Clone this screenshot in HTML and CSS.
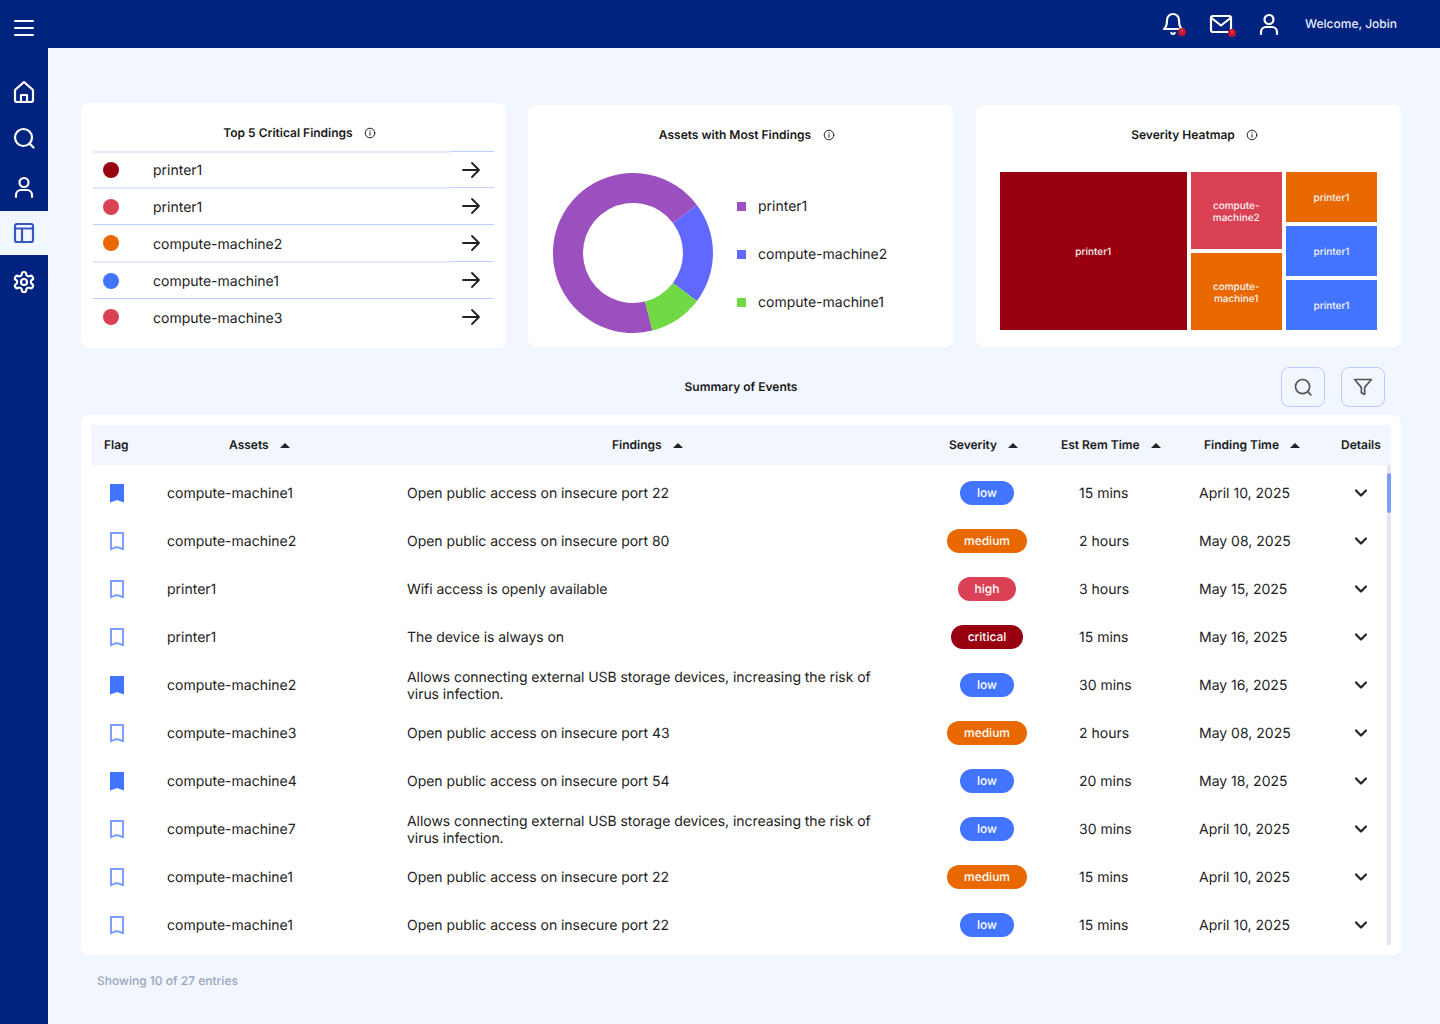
FILE: index.html
```html
<!DOCTYPE html>
<html lang="en">
<head>
<meta charset="utf-8">
<title>Dashboard</title>
<link rel="stylesheet" href="styles.css">
</head>
<body>
<svg class="defs" width="0" height="0" aria-hidden="true">
  <symbol id="i-user" viewBox="0 0 24 24"><circle cx="12" cy="7.5" r="4.5"/><path d="M4 22v-2a5 5 0 0 1 5-5h6a5 5 0 0 1 5 5v2"/></symbol>
  <symbol id="i-search" viewBox="0 0 24 24"><circle cx="11.5" cy="11.5" r="8.5"/><path d="m21.5 21.5-3.9-3.9"/></symbol>
  <symbol id="i-info" viewBox="0 0 12 12"><circle cx="6" cy="6" r="4.8"/><path d="M6 5.6v2.6M6 3.6v.4"/></symbol>
  <symbol id="i-arrow" viewBox="0 0 24 24"><path d="M4 12h16M13 5l7 7-7 7"/></symbol>
  <symbol id="i-chev" viewBox="0 0 12 8"><path d="m1 1.5 5 5 5-5"/></symbol>
  <symbol id="i-flag" viewBox="0 0 16 20"><path d="M2 2h12v16l-6-2L2 18z"/></symbol>
</svg>
<div class="app">
  <header class="topbar">
    <button class="menu" aria-label="Menu"><span></span><span></span><span></span></button>
    <div class="top-actions">
      <span class="top-icon">
        <svg class="ico" width="24" height="24" viewBox="0 0 24 24"><path d="M6 8a6 6 0 0 1 12 0c0 7 3 9 3 9H3s3-2 3-9"/><path d="M10.3 21a1.94 1.94 0 0 0 3.4 0"/></svg>
        <i class="dot-alert bell-dot">!</i>
      </span>
      <span class="top-icon">
        <svg class="ico" width="24" height="24" viewBox="0 0 24 24"><rect x="2" y="4" width="20" height="16" rx="2"/><path d="m2.5 6 9.5 7.5L21.5 6"/></svg>
        <i class="dot-alert mail-dot">!</i>
      </span>
      <span class="top-icon">
        <svg class="ico" width="24" height="24"><use href="#i-user"/></svg>
      </span>
      <span class="welcome">Welcome, Jobin</span>
    </div>
  </header>
  <nav class="sidebar">
    <a class="nav-item"><svg class="ico" width="24" height="24" viewBox="0 0 24 24"><path d="M3 10 12 2l9 8v10a2 2 0 0 1-2 2H5a2 2 0 0 1-2-2z"/><path d="M9 22v-7h6v7"/></svg></a>
    <a class="nav-item"><svg class="ico" width="24" height="24"><use href="#i-search"/></svg></a>
    <a class="nav-item"><svg class="ico" width="24" height="24"><use href="#i-user"/></svg></a>
    <a class="nav-item active"><svg class="ico" width="24" height="24" viewBox="0 0 24 24"><rect x="3" y="3" width="18" height="18" rx="2"/><path d="M3 7.5h18M10 7.5V21"/></svg></a>
    <a class="nav-item"><svg class="ico" width="24" height="24" viewBox="0 0 24 24"><path d="M12.22 2h-.44a2 2 0 0 0-2 2v.18a2 2 0 0 1-1 1.73l-.43.25a2 2 0 0 1-2 0l-.15-.08a2 2 0 0 0-2.73.73l-.22.38a2 2 0 0 0 .73 2.73l.15.1a2 2 0 0 1 1 1.72v.51a2 2 0 0 1-1 1.74l-.15.09a2 2 0 0 0-.73 2.73l.22.38a2 2 0 0 0 2.73.73l.15-.08a2 2 0 0 1 2 0l.43.25a2 2 0 0 1 1 1.73V20a2 2 0 0 0 2 2h.44a2 2 0 0 0 2-2v-.18a2 2 0 0 1 1-1.73l.43-.25a2 2 0 0 1 2 0l.15.08a2 2 0 0 0 2.73-.73l.22-.39a2 2 0 0 0-.73-2.73l-.15-.08a2 2 0 0 1-1-1.74v-.5a2 2 0 0 1 1-1.74l.15-.09a2 2 0 0 0 .73-2.73l-.22-.38a2 2 0 0 0-2.73-.73l-.15.08a2 2 0 0 1-2 0l-.43-.25a2 2 0 0 1-1-1.73V4a2 2 0 0 0-2-2z"/><circle cx="12" cy="12" r="3"/></svg></a>
  </nav>
  <main class="main">
    <section class="cards">
      <article class="card card-top">
        <h2 class="card-title"><span class="lift">Top 5 Critical Findings</span> <svg class="info" width="12" height="12"><use href="#i-info"/></svg></h2>
        <ul class="top-list">
          <li class="top-row pale"><span class="top-main"><i class="sev-dot critical"></i><span class="top-name">printer1</span></span><span class="top-go"><svg class="arrow" width="24" height="24"><use href="#i-arrow"/></svg></span></li>
          <li class="top-row pale"><span class="top-main"><i class="sev-dot high"></i><span class="top-name">printer1</span></span><span class="top-go"><svg class="arrow" width="24" height="24"><use href="#i-arrow"/></svg></span></li>
          <li class="top-row"><span class="top-main"><i class="sev-dot medium"></i><span class="top-name">compute-machine2</span></span><span class="top-go"><svg class="arrow" width="24" height="24"><use href="#i-arrow"/></svg></span></li>
          <li class="top-row pale"><span class="top-main"><i class="sev-dot low"></i><span class="top-name">compute-machine1</span></span><span class="top-go"><svg class="arrow" width="24" height="24"><use href="#i-arrow"/></svg></span></li>
          <li class="top-row"><span class="top-main"><i class="sev-dot high"></i><span class="top-name">compute-machine3</span></span><span class="top-go"><svg class="arrow" width="24" height="24"><use href="#i-arrow"/></svg></span></li>
        </ul>
      </article>
      <article class="card card-side">
        <h2 class="card-title"><span class="lift">Assets with Most Findings</span> <svg class="info" width="12" height="12"><use href="#i-info"/></svg></h2>
        <div class="donut-wrap">
          <svg class="donut" width="160" height="160" viewBox="0 0 160 160">
            <path class="seg-purple" d="M99.4 157.6A80 80 0 1 1 143.9 31.9L119.9 49.9A50 50 0 1 0 92.1 128.5z"/>
            <path class="seg-blue" d="M143.9 31.9A80 80 0 0 1 143.9 128.1L119.9 110.1A50 50 0 0 0 119.9 49.9z"/>
            <path class="seg-green" d="M143.9 128.1A80 80 0 0 1 99.4 157.6L92.1 128.5A50 50 0 0 0 119.9 110.1z"/>
          </svg>
          <ul class="legend">
            <li><i class="swatch purple"></i>printer1</li>
            <li><i class="swatch blue"></i>compute-machine2</li>
            <li><i class="swatch green"></i>compute-machine1</li>
          </ul>
        </div>
      </article>
      <article class="card card-side card-heat">
        <h2 class="card-title"><span class="lift">Severity Heatmap</span> <svg class="info" width="12" height="12"><use href="#i-info"/></svg></h2>
        <div class="heatmap">
          <div class="tile critical big">printer1</div>
          <div class="heat-col mid">
            <div class="tile high">compute-machine2</div>
            <div class="tile medium">compute-machine1</div>
          </div>
          <div class="heat-col end">
            <div class="tile medium">printer1</div>
            <div class="tile low">printer1</div>
            <div class="tile low">printer1</div>
          </div>
        </div>
      </article>
    </section>

    <section class="summary-bar">
      <span></span>
      <h2 class="summary-title">Summary of Events</h2>
      <div class="summary-tools">
        <button class="tool" aria-label="Search"><svg class="tool-ico" width="20" height="20"><use href="#i-search"/></svg></button>
        <button class="tool" aria-label="Filter"><svg class="tool-ico" width="20" height="20" viewBox="0 0 24 24"><path d="M22 3H2l8 9.46V19l4 2v-8.54z"/></svg></button>
      </div>
    </section>

    <section class="table-card">
      <div class="t-head t-grid">
        <div class="h-flag"><span class="lift">Flag</span></div>
        <div class="h-assets"><span class="lift">Assets</span><i class="sort"></i></div>
        <div class="h-findings"><span class="lift">Findings</span><i class="sort"></i></div>
        <div class="h-sev"><span class="lift">Severity</span><i class="sort"></i></div>
        <div class="h-est"><span class="lift">Est Rem Time</span><i class="sort"></i></div>
        <div class="h-time"><span class="lift">Finding Time</span><i class="sort"></i></div>
        <div class="h-det"><span class="lift">Details</span></div>
      </div>
      <div class="t-body">
        <div class="t-row t-grid"><div class="c-flag"><svg class="flag on" width="16" height="20"><use href="#i-flag"/></svg></div><div>compute-machine1</div><div class="c-find">Open public access on insecure port 22</div><div class="c-sev"><span class="badge low">low</span></div><div class="c-est">15 mins</div><div class="c-time">April 10, 2025</div><div class="c-det"><svg class="chev" width="12" height="8"><use href="#i-chev"/></svg></div></div>
        <div class="t-row t-grid"><div class="c-flag"><svg class="flag" width="16" height="20"><use href="#i-flag"/></svg></div><div>compute-machine2</div><div class="c-find">Open public access on insecure port 80</div><div class="c-sev"><span class="badge medium">medium</span></div><div class="c-est">2 hours</div><div class="c-time">May 08, 2025</div><div class="c-det"><svg class="chev" width="12" height="8"><use href="#i-chev"/></svg></div></div>
        <div class="t-row t-grid"><div class="c-flag"><svg class="flag" width="16" height="20"><use href="#i-flag"/></svg></div><div>printer1</div><div class="c-find">Wifi access is openly available</div><div class="c-sev"><span class="badge high">high</span></div><div class="c-est">3 hours</div><div class="c-time">May 15, 2025</div><div class="c-det"><svg class="chev" width="12" height="8"><use href="#i-chev"/></svg></div></div>
        <div class="t-row t-grid"><div class="c-flag"><svg class="flag" width="16" height="20"><use href="#i-flag"/></svg></div><div>printer1</div><div class="c-find">The device is always on</div><div class="c-sev"><span class="badge critical">critical</span></div><div class="c-est">15 mins</div><div class="c-time">May 16, 2025</div><div class="c-det"><svg class="chev" width="12" height="8"><use href="#i-chev"/></svg></div></div>
        <div class="t-row t-grid"><div class="c-flag"><svg class="flag on" width="16" height="20"><use href="#i-flag"/></svg></div><div>compute-machine2</div><div class="c-find two-line">Allows connecting external USB storage devices, increasing the risk of virus infection.</div><div class="c-sev"><span class="badge low">low</span></div><div class="c-est">30 mins</div><div class="c-time">May 16, 2025</div><div class="c-det"><svg class="chev" width="12" height="8"><use href="#i-chev"/></svg></div></div>
        <div class="t-row t-grid"><div class="c-flag"><svg class="flag" width="16" height="20"><use href="#i-flag"/></svg></div><div>compute-machine3</div><div class="c-find">Open public access on insecure port 43</div><div class="c-sev"><span class="badge medium">medium</span></div><div class="c-est">2 hours</div><div class="c-time">May 08, 2025</div><div class="c-det"><svg class="chev" width="12" height="8"><use href="#i-chev"/></svg></div></div>
        <div class="t-row t-grid"><div class="c-flag"><svg class="flag on" width="16" height="20"><use href="#i-flag"/></svg></div><div>compute-machine4</div><div class="c-find">Open public access on insecure port 54</div><div class="c-sev"><span class="badge low">low</span></div><div class="c-est">20 mins</div><div class="c-time">May 18, 2025</div><div class="c-det"><svg class="chev" width="12" height="8"><use href="#i-chev"/></svg></div></div>
        <div class="t-row t-grid"><div class="c-flag"><svg class="flag" width="16" height="20"><use href="#i-flag"/></svg></div><div>compute-machine7</div><div class="c-find two-line">Allows connecting external USB storage devices, increasing the risk of virus infection.</div><div class="c-sev"><span class="badge low">low</span></div><div class="c-est">30 mins</div><div class="c-time">April 10, 2025</div><div class="c-det"><svg class="chev" width="12" height="8"><use href="#i-chev"/></svg></div></div>
        <div class="t-row t-grid"><div class="c-flag"><svg class="flag" width="16" height="20"><use href="#i-flag"/></svg></div><div>compute-machine1</div><div class="c-find">Open public access on insecure port 22</div><div class="c-sev"><span class="badge medium">medium</span></div><div class="c-est">15 mins</div><div class="c-time">April 10, 2025</div><div class="c-det"><svg class="chev" width="12" height="8"><use href="#i-chev"/></svg></div></div>
        <div class="t-row t-grid"><div class="c-flag"><svg class="flag" width="16" height="20"><use href="#i-flag"/></svg></div><div>compute-machine1</div><div class="c-find">Open public access on insecure port 22</div><div class="c-sev"><span class="badge low">low</span></div><div class="c-est">15 mins</div><div class="c-time">April 10, 2025</div><div class="c-det"><svg class="chev" width="12" height="8"><use href="#i-chev"/></svg></div></div>
        <div class="scroll-track"><div class="scroll-thumb"></div></div>
      </div>
    </section>
    <p class="entries">Showing 10 of 27 entries</p>
  </main>
</div>
</body>
</html>
```
FILE: styles.css
```css
* { box-sizing: border-box; }
html, body { margin: 0; padding: 0; }
body {
  font-family: Inter, "Noto Sans", sans-serif;
  font-size: 14px;
  color: #222;
  background: #f2f6ff;
  height: 1024px;
  overflow: hidden;
  text-rendering: geometricPrecision;
}
.defs { position: absolute; }
h2, p, ul { margin: 0; padding: 0; }
ul { list-style: none; }
.lift { padding-bottom: 2px; }

.app {
  display: grid;
  grid-template-columns: 48px 1fr;
  grid-template-rows: 48px 1fr;
  height: 1024px;
}

.ico {
  fill: none;
  stroke: #fff;
  stroke-width: 2.2;
  stroke-linecap: round;
  stroke-linejoin: round;
  display: block;
}

/* top bar */
.topbar {
  grid-column: 1 / 3;
  background: #00237f;
  display: flex;
  align-items: center;
  justify-content: space-between;
  padding: 0 43px 0 14px;
}
.menu {
  width: 20px;
  height: 16px;
  margin-top: 8px;
  padding: 0;
  border: 0;
  background: none;
  display: flex;
  flex-direction: column;
  justify-content: space-between;
}
.menu span { display: block; height: 2px; border-radius: 1px; background: #fff; }
.top-actions { display: flex; align-items: center; gap: 24px; }
.top-icon { position: relative; display: block; width: 24px; height: 24px; }
.dot-alert {
  position: absolute;
  display: flex;
  align-items: center;
  justify-content: center;
  width: 8px;
  height: 8px;
  border-radius: 50%;
  background: #c4162a;
  font-size: 5px;
  font-style: normal;
  line-height: 1;
  color: #f3c9cf;
}
.bell-dot { right: -1px; bottom: 0; }
.mail-dot { right: -3px; bottom: -1px; }
.welcome { font-size: 12px; font-weight: 500; color: #e8edfb; padding-bottom: 2px; }

/* sidebar */
.sidebar { background: #00237f; padding-top: 17px; display: flex; flex-direction: column; }
.nav-item {
  height: 44px;
  display: flex;
  align-items: center;
  justify-content: center;
}
.nav-item:nth-child(odd) { margin-top: 5px; }
.nav-item:nth-child(even) { margin-top: 2px; }
.nav-item.active { background: #f2f6ff; }
.nav-item.active .ico { stroke: #3657bd; }

/* main */
.main { padding: 55px 39px 0 33px; min-width: 0; }
.cards {
  display: grid;
  grid-template-columns: 425px 425px 426px;
  column-gap: 22px;
  align-items: start;
}
.card { background: #fff; border-radius: 8px; }
.card-top { padding: 21px 12px 13px; height: 245px; }
.card-side { margin-top: 2px; padding: 21px 24px 0; height: 242px; }
.card-heat { margin-left: 1px; }
.card-title {
  display: flex;
  align-items: center;
  justify-content: center;
  gap: 11.5px;
  height: 18px;
  padding-left: 12.5px;
  font-size: 12px;
  font-weight: 600;
  color: #1a1a1a;
}
.info {
  fill: none;
  stroke: #222;
  stroke-width: 1;
  stroke-linecap: round;
}

/* top list */
.top-list { margin-top: 9px; }
.top-row { display: flex; height: 37px; }
.top-row:first-child { height: 36px; }
.top-main {
  flex: 1;
  display: flex;
  align-items: center;
  gap: 34px;
  padding-left: 10px;
  border-top: 1px solid #bfd0ff;
}
.top-name { padding-top: 2px; }
.top-row:first-child .top-main { padding-bottom: 1px; }
.top-row.pale .top-main { border-top: 2px solid #e6e9f7; }
.top-go {
  width: 44px;
  display: flex;
  align-items: center;
  padding-left: 9px;
  border-top: 1px solid #bfd0ff;
}
.arrow { fill: none; stroke: #222; stroke-width: 1.8; stroke-linecap: round; stroke-linejoin: round; }
.sev-dot { width: 16px; height: 16px; border-radius: 50%; flex: none; }
.sev-dot.critical, .tile.critical, .badge.critical { background: #99000f; }
.sev-dot.high, .tile.high, .badge.high { background: #db4154; }
.sev-dot.medium, .tile.medium, .badge.medium { background: #e96800; }
.sev-dot.low, .tile.low, .badge.low { background: #4274ff; }

/* donut */
.donut-wrap { display: flex; align-items: center; margin-top: 29px; padding-left: 1px; gap: 24px; }
.donut { display: block; flex: none; }
.seg-purple { fill: #9c50c0; }
.seg-blue { fill: #6068ff; }
.seg-green { fill: #70d944; }
.legend { display: flex; flex-direction: column; gap: 28px; padding-top: 3px; }
.legend li { display: flex; align-items: center; gap: 12px; height: 20px; color: #222; }
.swatch { width: 9px; height: 9px; flex: none; }
.swatch.purple { background: #9c50c0; }
.swatch.blue { background: #6068ff; }
.swatch.green { background: #70d944; }

/* heatmap */
.heatmap { display: flex; gap: 4px; margin-top: 28px; height: 158px; }
.heat-col { display: flex; flex-direction: column; gap: 4px; }
.heat-col .tile { flex: 1; }
.heat-col.mid { width: 91.5px; }
.heat-col.end { width: 91px; }
.tile.big { width: 186.5px; }
.tile {
  display: flex;
  align-items: center;
  justify-content: center;
  text-align: center;
  padding: 2px 14px 0;
  font-size: 10px;
  line-height: 12px;
  font-weight: 500;
  color: #f5f5f5;
}

/* summary */
.summary-bar {
  display: grid;
  grid-template-columns: 1fr auto 1fr;
  align-items: center;
  height: 40px;
  margin-top: 19px;
  padding-right: 16px;
}
.summary-title { font-size: 12px; font-weight: 600; color: #1a1a1a; padding: 0 0 2px 16px; }
.summary-tools { display: flex; justify-content: flex-end; gap: 16px; }
.tool {
  width: 44px;
  height: 40px;
  padding: 0;
  background: #f2f6ff;
  border: 1px solid #b9cbff;
  border-radius: 8px;
  display: flex;
  align-items: center;
  justify-content: center;
}
.tool-ico { fill: none; stroke: #555; stroke-width: 2; stroke-linecap: round; stroke-linejoin: round; }

/* table */
.table-card { margin-top: 8px; padding: 10px; background: #fff; border-radius: 8px; }
.t-grid {
  display: grid;
  grid-template-columns: 76px 240px 520px 120px 140px 144px 60px;
  align-items: center;
}
.t-head {
  height: 40px;
  background: #f2f6ff;
  font-size: 12px;
  font-weight: 600;
  color: #1a1a1a;
}
.t-head > div { display: flex; align-items: center; }
.sort {
  width: 0;
  height: 0;
  margin-left: 11px;
  border-left: 5px solid transparent;
  border-right: 5px solid transparent;
  border-bottom: 5px solid #222;
}
.h-flag { padding-left: 13px; }
.h-assets { padding-left: 62px; }
.h-findings { padding-left: 205px; }
.h-sev { padding-left: 22px; }
.h-est { padding-left: 14px; }
.h-time { padding-left: 17px; }
.h-det { padding-left: 10px; }

.t-body { position: relative; height: 480px; padding-top: 4px; overflow: hidden; }
.t-row { height: 48px; color: #222; }
.c-flag { padding-left: 18px; }
.c-find { max-width: 480px; line-height: 17px; letter-spacing: -0.05px; }
.c-find.two-line { padding-top: 2px; }
.c-sev { display: flex; justify-content: center; }
.c-est { padding-left: 32px; }
.c-time { padding-left: 12px; }
.c-det { display: flex; justify-content: center; padding-bottom: 1px; }
.flag { display: block; fill: none; stroke: #7f9dff; stroke-width: 2; }
.flag.on { fill: #4274ff; stroke: #4274ff; }
.chev { display: block; fill: none; stroke: #222; stroke-width: 2.2; stroke-linecap: round; stroke-linejoin: round; }
.badge {
  display: flex;
  align-items: center;
  height: 24px;
  padding: 0 16.5px 2px;
  border-radius: 12px;
  font-size: 12px;
  font-weight: 500;
  color: #fff;
}
.scroll-track {
  position: absolute;
  top: 0;
  right: 0;
  width: 4px;
  height: 480px;
  background: #e4e7ee;
}
.scroll-thumb { margin-top: 8px; height: 40px; border-radius: 2px; background: #7e9cff; }

.entries { margin-top: 18px; padding-left: 16px; font-size: 12px; line-height: 16px; font-weight: 500; color: #9aa5bb; }
```
